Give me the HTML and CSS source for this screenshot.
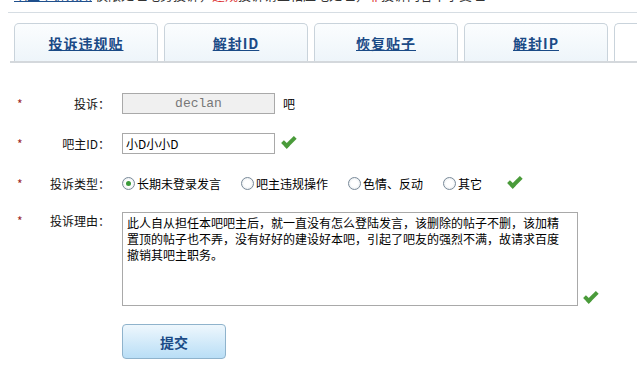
FILE: index.html
```html
<!DOCTYPE html>
<html lang="zh-CN">
<head>
    <meta charset="UTF-8">
    <title>投诉吧主</title>
    <link rel="stylesheet" href="styles.css">
</head>
<body>
    <div class="top-note">
        <div class="top-note-text"><a href="#">吧主申诉须知</a> 仅限处理吧务投诉，<span class="red">违规</span>投诉请至相应吧处理，<span class="red">非</span>投诉内容不予受理</div>
    </div>

    <ul class="tabs">
        <li class="tab"><a href="#">投诉违规贴</a></li>
        <li class="tab"><a href="#">解封ID</a></li>
        <li class="tab"><a href="#">恢复贴子</a></li>
        <li class="tab"><a href="#">解封IP</a></li>
        <li class="tab tab-cut"></li>
    </ul>

    <form class="complaint">
        <div class="row">
            <span class="star">*</span>
            <label class="label">投诉：</label>
            <input class="field field-ro" type="text" value="declan" readonly>
            <span class="suffix">吧</span>
        </div>
        <div class="row">
            <span class="star">*</span>
            <label class="label">吧主ID：</label>
            <input class="field" type="text" value="小D小小D">
            <span class="ok"></span>
        </div>
        <div class="row">
            <span class="star">*</span>
            <label class="label">投诉类型：</label>
            <div class="radios">
                <label class="radio r1"><span class="dot on"></span>长期未登录发言</label>
                <label class="radio r2"><span class="dot"></span>吧主违规操作</label>
                <label class="radio r3"><span class="dot"></span>色情、反动</label>
                <label class="radio r4"><span class="dot"></span>其它</label>
            </div>
            <span class="ok"></span>
        </div>
        <div class="row row-top">
            <span class="star">*</span>
            <label class="label">投诉理由：</label>
            <div class="reason">此人自从担任本吧吧主后，就一直没有怎么登陆发言，该删除的帖子不删，该加精置顶的帖子也不弄，没有好好的建设好本吧，引起了吧友的强烈不满，故请求百度撤销其吧主职务。</div>
            <span class="ok ok-bottom"></span>
        </div>
        <div class="actions">
            <button type="button" class="submit">提交</button>
        </div>
    </form>
</body>
</html>
```

FILE: styles.css
```css
* {
    margin: 0;
    padding: 0;
    box-sizing: border-box;
}

body {
    width: 637px;
    height: 379px;
    overflow: hidden;
    background: #fff;
    font-family: "Noto Sans CJK SC", "DejaVu Sans", sans-serif;
    font-size: 12px;
    color: #000;
}

.top-note {
    height: 13px;
    margin-left: 8px;
    border-bottom: 1px solid #d6dde3;
    overflow: hidden;
}

.top-note-text {
    margin-top: -14px;
    padding-left: 6px;
    font-size: 13px;
    line-height: 17px;
    white-space: nowrap;
    color: #333;
}

.top-note-text a {
    color: #1f4f8c;
}

.red {
    color: #d33;
}

.tabs {
    list-style: none;
    display: flex;
    gap: 6px;
    margin: 10px 0 0 10px;
    padding-left: 4px;
    border-bottom: 2px solid #d4d8dc;
    height: 40px;
}

.tab {
    width: 144px;
    height: 38px;
    border: 1px solid #c9d3db;
    border-bottom: none;
    border-radius: 5px 5px 0 0;
    background: linear-gradient(#fbfdfe, #eef5fa);
    display: flex;
    align-items: center;
    justify-content: center;
}

.tab-cut {
    flex: 1;
    border-right: none;
    border-radius: 5px 0 0 0;
    background: #fff;
}

.tab a {
    font-size: 14px;
    font-weight: bold;
    color: #1a4a86;
    text-decoration: underline;
    letter-spacing: 1px;
}

.complaint {
    margin-top: 29px;
}

.row {
    display: flex;
    align-items: center;
    height: 22px;
    margin-bottom: 18px;
}

.row-top {
    align-items: flex-start;
    height: auto;
}

.star {
    width: 110px;
    padding-left: 17px;
    color: #9c2a2a;
    font-size: 12px;
}

.label {
    width: 0;
    margin-left: -110px;
    flex: 0 0 110px;
    text-align: right;
    white-space: nowrap;
    color: #111;
}

.field {
    width: 153px;
    height: 21px;
    margin-left: 12px;
    border: 1px solid #a9a9a9;
    padding: 0 3px;
    font-family: "Noto Sans CJK SC", sans-serif;
    font-size: 12px;
    color: #000;
    outline: none;
}

.field-ro {
    background: #f0f0f0;
    color: #777;
    text-align: center;
    font-family: "Liberation Mono", "DejaVu Sans Mono", monospace;
    font-size: 13px;
}

.suffix {
    margin-left: 8px;
}

.ok {
    display: inline-block;
    width: 14px;
    height: 8px;
    margin-left: 9px;
    border-left: 4px solid #4a9b3a;
    border-bottom: 4px solid #4a9b3a;
    transform: rotate(-45deg) translateY(-3px);
}

.radios {
    display: flex;
    margin-left: 12px;
    width: 379px;
}

.radio {
    display: flex;
    align-items: center;
    gap: 2px;
}

.r1 { width: 119px; }
.r2 { width: 107px; }
.r3 { width: 95px; }
.r4 { width: 58px; }

.dot {
    width: 13px;
    height: 13px;
    border: 1px solid #7a8a99;
    border-radius: 50%;
    background: radial-gradient(#fff 40%, #dde3e8);
    position: relative;
}

.dot.on::after {
    content: "";
    position: absolute;
    left: 3px;
    top: 3px;
    width: 5px;
    height: 5px;
    border-radius: 50%;
    background: #3a9a3a;
}

.reason {
    width: 456px;
    height: 94px;
    margin-left: 12px;
    margin-top: 0;
    border: 1px solid #a9a9a9;
    padding: 2px 10px 2px 4px;
    font-size: 12px;
    line-height: 16px;
}

.ok-bottom {
    align-self: flex-end;
    margin-left: 8px;
    margin-bottom: 4px;
}

.actions {
    padding-left: 122px;
    margin-top: 9px;
}

.submit {
    width: 104px;
    height: 35px;
    border: 1px solid #8fb3cc;
    border-radius: 4px;
    background: linear-gradient(#eef7fd, #b9def6);
    font-family: "Noto Sans CJK SC", sans-serif;
    font-size: 14px;
    font-weight: bold;
    color: #1a4a86;
}
```
